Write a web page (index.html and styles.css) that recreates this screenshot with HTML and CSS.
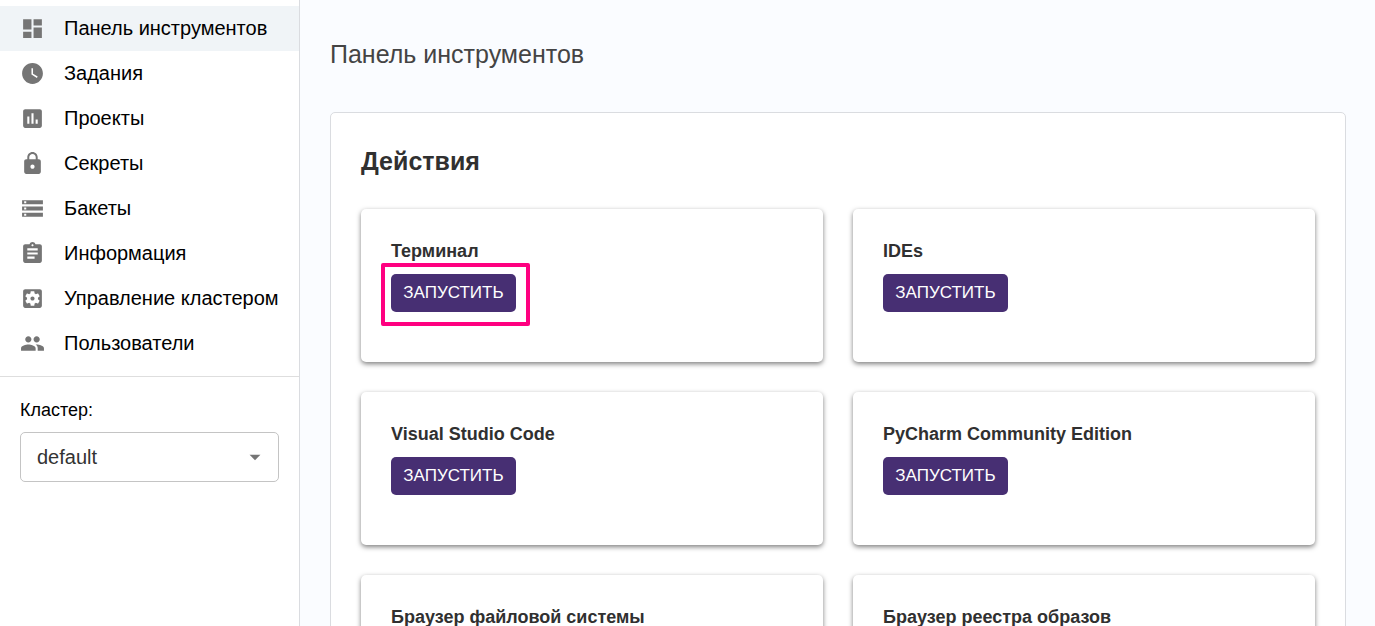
FILE: index.html
```html
<!DOCTYPE html>
<html lang="ru">
<head>
<meta charset="utf-8">
<meta name="viewport" content="width=device-width, initial-scale=1">
<title>Панель инструментов</title>
<link rel="stylesheet" href="styles.css">
</head>
<body>
<div class="app">
  <aside class="sidebar">
    <nav class="nav">
      <a class="nav-link active" href="#dashboard" aria-current="page">
        <svg class="icon" viewBox="0 0 24 24" aria-hidden="true"><path d="M3 13h8V3H3v10zm0 8h8v-6H3v6zm10 0h8V11h-8v10zm0-18v6h8V3h-8z"/></svg>
        <span>Панель инструментов</span>
      </a>
      <a class="nav-link" href="#jobs">
        <svg class="icon" viewBox="0 0 24 24" aria-hidden="true"><path d="M12 2C6.500 2 2 6.500 2 12s4.500 10 10 10 10-4.500 10-10S17.500 2 12 2zm4.200 14.200L11 13V7h1.500v5.200l4.500 2.700-.8 1.300z"/></svg>
        <span>Задания</span>
      </a>
      <a class="nav-link" href="#projects">
        <svg class="icon" viewBox="0 0 24 24" aria-hidden="true"><path d="M19 3H5c-1.100 0-2 .9-2 2v14c0 1.100.9 2 2 2h14c1.100 0 2-.9 2-2V5c0-1.100-.9-2-2-2zM9 17H7v-7h2v7zm4 0h-2V7h2v10zm4 0h-2v-4h2v4z"/></svg>
        <span>Проекты</span>
      </a>
      <a class="nav-link" href="#secrets">
        <svg class="icon" viewBox="0 0 24 24" aria-hidden="true"><path d="M18 8h-1V6c0-2.760-2.240-5-5-5S7 3.240 7 6v2H6c-1.100 0-2 .9-2 2v10c0 1.100.9 2 2 2h12c1.100 0 2-.9 2-2V10c0-1.100-.9-2-2-2zm-6 9c-1.100 0-2-.9-2-2s.9-2 2-2 2 .9 2 2-.9 2-2 2zm3.100-9H8.900V6c0-1.710 1.390-3.100 3.100-3.100s3.100 1.390 3.100 3.100v2z"/></svg>
        <span>Секреты</span>
      </a>
      <a class="nav-link" href="#buckets">
        <svg class="icon" viewBox="0 0 24 24" aria-hidden="true"><path d="M2 20h20v-4H2v4zm2-3h2v2H4v-2zM2 4v4h20V4H2zm4 3H4V5h2v2zm-4 7h20v-4H2v4zm2-3h2v2H4v-2z"/></svg>
        <span>Бакеты</span>
      </a>
      <a class="nav-link" href="#information">
        <svg class="icon" viewBox="0 0 24 24" aria-hidden="true"><path d="M19 3h-4.180C14.400 1.840 13.300 1 12 1s-2.400.84-2.820 2H5c-1.100 0-2 .9-2 2v14c0 1.100.9 2 2 2h14c1.100 0 2-.9 2-2V5c0-1.100-.9-2-2-2zm-7 0c.55 0 1 .45 1 1s-.45 1-1 1-1-.45-1-1 .45-1 1-1zm2 14H7v-2h7v2zm3-4H7v-2h10v2zm0-4H7V7h10v2z"/></svg>
        <span>Информация</span>
      </a>
      <a class="nav-link" href="#cluster">
        <svg class="icon" viewBox="0 0 24 24" aria-hidden="true"><path d="M12 10c-1.100 0-2 .9-2 2s.9 2 2 2 2-.9 2-2-.9-2-2-2zm7-7H5c-1.110 0-2 .9-2 2v14c0 1.100.89 2 2 2h14c1.110 0 2-.9 2-2V5c0-1.100-.89-2-2-2zm-1.750 9c0 .23-.02.46-.05.68l1.480 1.160c.13.11.17.3.08.45l-1.400 2.420c-.09.15-.27.21-.43.15l-1.740-.7c-.36.28-.76.51-1.180.69l-.26 1.850c-.03.17-.18.3-.35.3h-2.800c-.17 0-.32-.13-.35-.29l-.26-1.850c-.43-.18-.82-.41-1.180-.69l-1.740.7c-.16.06-.34 0-.43-.15l-1.400-2.420c-.09-.15-.05-.34.08-.45l1.480-1.160c-.03-.23-.05-.46-.05-.69 0-.23.02-.46.05-.68l-1.480-1.160c-.13-.11-.17-.3-.08-.45l1.400-2.420c.09-.15.27-.21.43-.15l1.740.7c.36-.28.76-.51 1.180-.69l.26-1.850c.03-.17.18-.3.35-.3h2.800c.17 0 .32.13.35.29l.26 1.850c.43.18.82.41 1.180.69l1.740-.7c.16-.06.34 0 .43.15l1.400 2.420c.09.15.05.34-.08.45l-1.480 1.160c.03.23.05.46.05.69z"/></svg>
        <span>Управление кластером</span>
      </a>
      <a class="nav-link" href="#users">
        <svg class="icon" viewBox="0 0 24 24" aria-hidden="true"><path d="M16 11c1.660 0 2.990-1.340 2.990-3S17.660 5 16 5s-3 1.340-3 3 1.340 3 3 3zm-8 0c1.660 0 2.990-1.340 2.990-3S9.660 5 8 5 5 6.340 5 8s1.340 3 3 3zm0 2c-2.330 0-7 1.170-7 3.500V19h14v-2.500C15 14.170 10.330 13 8 13zm8 0c-.29 0-.62.02-.97.05 1.160.84 1.970 1.970 1.970 3.450V19h6v-2.500c0-2.330-4.670-3.500-7-3.500z"/></svg>
        <span>Пользователи</span>
      </a>
    </nav>
    <div class="cluster">
      <label class="cluster-label" for="cluster-select">Кластер:</label>
      <div class="select-box">
        <select class="select" id="cluster-select"><option>default</option></select>
        <svg class="arrow" viewBox="0 0 24 24" aria-hidden="true"><path d="M7 10l5 5 5-5z"/></svg>
      </div>
    </div>
  </aside>
  <main class="main">
    <h1 class="title">Панель инструментов</h1>
    <section class="panel">
      <h2 class="panel-title">Действия</h2>
      <div class="cards">
        <article class="card">
          <h3 class="card-title">Терминал</h3>
          <div class="launch marked"><button class="button" type="button">ЗАПУСТИТЬ</button></div>
        </article>
        <article class="card">
          <h3 class="card-title">IDEs</h3>
          <div class="launch"><button class="button" type="button">ЗАПУСТИТЬ</button></div>
        </article>
        <article class="card">
          <h3 class="card-title">Visual Studio Code</h3>
          <div class="launch"><button class="button" type="button">ЗАПУСТИТЬ</button></div>
        </article>
        <article class="card">
          <h3 class="card-title">PyCharm Community Edition</h3>
          <div class="launch"><button class="button" type="button">ЗАПУСТИТЬ</button></div>
        </article>
        <article class="card">
          <h3 class="card-title">Браузер файловой системы</h3>
          <div class="launch"><button class="button" type="button">ЗАПУСТИТЬ</button></div>
        </article>
        <article class="card">
          <h3 class="card-title">Браузер реестра образов</h3>
          <div class="launch"><button class="button" type="button">ЗАПУСТИТЬ</button></div>
        </article>
      </div>
    </section>
  </main>
</div>
</body>
</html>
```
FILE: styles.css
```css
* {
  box-sizing: border-box;
}

body {
  margin: 0;
  font-family: "Liberation Sans", Arial, sans-serif;
  color: #303030;
  background: #fafcff;
}

h1,
h2,
h3 {
  margin: 0;
}

.app {
  display: flex;
  height: 100vh;
}

.sidebar {
  flex: none;
  width: 300px;
  background: #fff;
  border-right: 1px solid #dadce0;
}

.nav {
  padding: 6px 0 10px;
  border-bottom: 1px solid #dedede;
}

.nav-link {
  display: flex;
  align-items: center;
  gap: 19px;
  padding: 9px 0 9px 20px;
  font-size: 20px;
  line-height: 27px;
  color: #000;
  text-decoration: none;
  white-space: nowrap;
}

.nav-link.active {
  background: #f0f4f7;
}

.icon {
  flex: none;
  width: 25px;
  height: 25px;
  fill: #757575;
}

.cluster {
  display: flex;
  flex-direction: column;
  gap: 10px;
  padding: 22px 20px;
}

.cluster-label {
  font-size: 18px;
  line-height: 23px;
  color: #000;
}

.select-box {
  position: relative;
}

.select {
  appearance: none;
  display: block;
  width: 100%;
  height: 50px;
  padding: 0 40px 0 16px;
  font: inherit;
  font-size: 20px;
  color: #333;
  background: #fff;
  border: 1px solid #c4c4c4;
  border-radius: 5px;
}

.arrow {
  position: absolute;
  top: 12px;
  right: 11px;
  width: 26px;
  height: 26px;
  fill: #757575;
  pointer-events: none;
}

.main {
  flex: 1;
  min-width: 0;
  padding: 39px 29px 30px 30px;
  overflow-y: auto;
  scrollbar-width: none;
}

.title {
  font-size: 25px;
  font-weight: 400;
  line-height: 30px;
  color: #444;
}

.panel {
  margin-top: 43px;
  padding: 30px;
  background: #fff;
  border: 1px solid #dadce0;
  border-radius: 5px;
}

.panel-title {
  font-size: 25px;
  line-height: 36px;
}

.cards {
  display: grid;
  grid-template-columns: 1fr 1fr;
  gap: 30px;
  margin-top: 30px;
}

.card {
  padding: 30px 30px 50px;
  background: #fff;
  border-radius: 5px;
  box-shadow: 0 2px 5px rgba(0, 0, 0, 0.5);
}

.card-title {
  font-size: 18px;
  line-height: 25px;
}

.launch {
  position: relative;
  width: fit-content;
  margin-top: 10px;
}

.button {
  display: block;
  width: 125px;
  height: 38px;
  padding: 0;
  font: inherit;
  font-size: 17px;
  line-height: 38px;
  color: #fff;
  background: #472f73;
  border: 0;
  border-radius: 5px;
}

.marked::after {
  content: "";
  position: absolute;
  inset: -11px -14px -14px -10px;
  border: 4px solid #ff0080;
  border-radius: 2px;
  pointer-events: none;
}
```
